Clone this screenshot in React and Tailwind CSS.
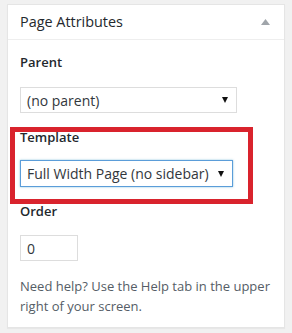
export default function App() {
  return (
    <div className="w-[292px] h-[333px] bg-[#f1f1f1] pt-[4px] pl-[7px] text-[#23282d]" style={{ fontFamily: '"Open Sans", "Liberation Sans", sans-serif' }}>
      {/* Panel */}
      <div className="relative w-[278px] h-[324px] bg-white border border-[#e5e5e5] shadow-[0_1px_1px_rgba(0,0,0,0.04)]">
        {/* Header */}
        <div className="h-[35px] border-b border-[#eeeeee] pl-[12px] pr-[14px] flex items-center justify-between">
          <span className="text-[14.4px] leading-[20px]">Page Attributes</span>
          <svg width="9" height="6" viewBox="0 0 9 6">
            <polygon points="4.5,0 9,6 0,6" fill="#a0a5aa" />
          </svg>
        </div>

        <div className="px-[12px]">
          <p className="mt-[12px] text-[13px] leading-[20px] font-semibold">Parent</p>
          <div className="mt-[15px] w-[217px] h-[26px] border border-[#dddddd] flex items-center justify-between pl-[6px] pr-[8px]">
            <span className="text-[14px] text-[#32373c]">(no parent)</span>
            <svg width="6" height="6" viewBox="0 0 6 6"><polygon points="0,0 6,0 3,6" fill="#111" /></svg>
          </div>

          <p className="mt-[14px] text-[13px] leading-[20px] font-semibold">Template</p>
          <div className="mt-[13px] w-[213px] h-[27px] border border-[#5b9dd9] shadow-[0_0_2px_rgba(30,140,190,0.5)] flex items-center justify-between pl-[6px] pr-[8px]">
            <span className="text-[14px] text-[#32373c]">Full Width Page (no sidebar)</span>
            <svg width="6" height="6" viewBox="0 0 6 6"><polygon points="0,0 6,0 3,6" fill="#111" /></svg>
          </div>

          <p className="mt-[14px] text-[13px] leading-[20px] font-semibold">Order</p>
          <div className="mt-[14px] w-[58px] h-[26px] border border-[#dddddd] flex items-center pl-[6px]">
            <span className="text-[14px] text-[#32373c]">0</span>
          </div>

          <p className="mt-[15px] text-[13px] leading-[20px] text-[#555d66]">
            Need help? Use the Help tab in the upper right of your screen.
          </p>
        </div>

        {/* Highlight annotation drawn over the Template field */}
        <div className="absolute left-[2px] top-[122px] w-[243px] h-[77px] border-[5px] border-[#d9232d]" />
      </div>
    </div>
  );
}
